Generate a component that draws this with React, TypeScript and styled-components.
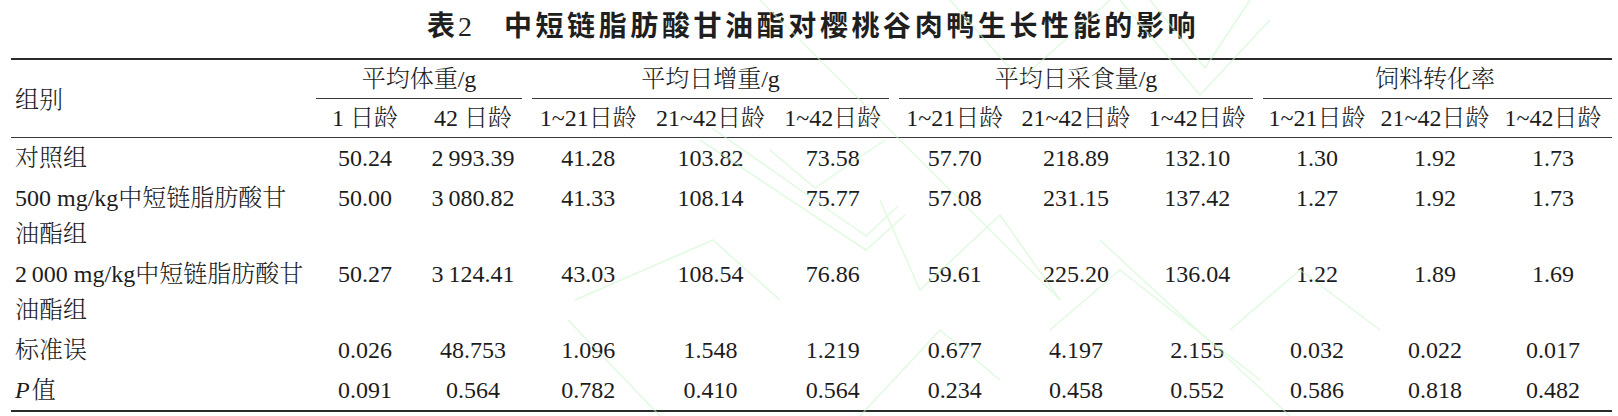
import React from "react";
import styled, { createGlobalStyle } from "styled-components";

const GlobalStyle = createGlobalStyle`
  html, body { margin: 0; padding: 0; background: #ffffff; }
  body { font-family: "Liberation Serif", "Noto Serif CJK SC", "Noto Sans CJK SC", serif; color: #1c1c1c; }
`;

const COLS =
  "300px 108px 108px 122.33px 122.33px 122.34px 121.33px 121.33px 121.34px 118px 118px 118px";

const Page = styled.div`
  position: relative;
  width: 1618px;
  height: 416px;
  overflow: hidden;
  background: #fff;
`;

const Title = styled.h1`
  box-sizing: border-box;
  margin: 0;
  height: 58px;
  padding: 0 0 11px 8px;
  display: flex;
  align-items: center;
  justify-content: center;
  font-family: "Noto Sans CJK SC", "Liberation Sans", sans-serif;
  font-weight: 700;
  font-size: 28px;
  letter-spacing: 3.6px;
  color: #1f1f1f;
`;

const TitleLabel = styled.span`
  margin-right: 32px;
  letter-spacing: 3px;
`;

const TitleNum = styled.span`
  font-family: "Liberation Serif", serif;
  font-weight: 400;
  letter-spacing: 0;
`;

const Table = styled.div`
  margin: 0 6px 0 11px;
  border-top: 2px solid #2a2a2a;
  font-size: 24px;
  font-weight: 300;
`;

const HeaderGrid = styled.div`
  display: grid;
  grid-template-columns: ${COLS};
  grid-template-rows: 39px 38px;
  border-bottom: 1px solid #3a3a3a;
`;

const StubHead = styled.div`
  grid-row: 1 / span 2;
  display: flex;
  align-items: center;
  padding: 2px 0 0 4px;
  line-height: 36px;
`;

const GroupHead = styled.div<{ $span: number }>`
  grid-column: span ${(p) => p.$span};
  display: flex;
  flex-direction: column;
  justify-content: flex-end;
`;

const GroupLabel = styled.div`
  text-align: center;
  line-height: 36px;
  margin-bottom: 1px;
`;

const CMidRule = styled.div<{ $last?: boolean }>`
  height: 1px;
  background: #3a3a3a;
  margin: 0 ${(p) => (p.$last ? "0" : "5px")} 0 5px;
`;

const SubHead = styled.div`
  display: flex;
  align-items: center;
  justify-content: center;
  line-height: 36px;
  white-space: nowrap;
`;

const BodyGrid = styled.div`
  display: grid;
  grid-template-columns: ${COLS};
  align-items: start;
  border-bottom: 2px solid #2a2a2a;
`;

const StubCell = styled.div`
  padding: 2px 6px 2px 4px;
  line-height: 36px;
`;

const DataCell = styled.div`
  padding: 2px 0;
  line-height: 36px;
  text-align: center;
  white-space: nowrap;
`;

const Italic = styled.i`
  font-style: italic;
  margin-right: 2px;
`;

const Watermark = styled.svg`
  position: absolute;
  left: 0;
  top: 0;
  pointer-events: none;
  opacity: 0.55;
`;

const groups: { label: string; span: number }[] = [
  { label: "平均体重/g", span: 2 },
  { label: "平均日增重/g", span: 3 },
  { label: "平均日采食量/g", span: 3 },
  { label: "饲料转化率", span: 3 },
];

const subs = [
  "1 日龄",
  "42 日龄",
  "1~21日龄",
  "21~42日龄",
  "1~42日龄",
  "1~21日龄",
  "21~42日龄",
  "1~42日龄",
  "1~21日龄",
  "21~42日龄",
  "1~42日龄",
];

const T = "\u2009";

const rows: { stub: React.ReactNode; values: string[] }[] = [
  {
    stub: "对照组",
    values: ["50.24", `2${T}993.39`, "41.28", "103.82", "73.58", "57.70", "218.89", "132.10", "1.30", "1.92", "1.73"],
  },
  {
    stub: "500 mg/kg中短链脂肪酸甘油酯组",
    values: ["50.00", `3${T}080.82`, "41.33", "108.14", "75.77", "57.08", "231.15", "137.42", "1.27", "1.92", "1.73"],
  },
  {
    stub: `2${T}000 mg/kg中短链脂肪酸甘油酯组`,
    values: ["50.27", `3${T}124.41`, "43.03", "108.54", "76.86", "59.61", "225.20", "136.04", "1.22", "1.89", "1.69"],
  },
  {
    stub: "标准误",
    values: ["0.026", "48.753", "1.096", "1.548", "1.219", "0.677", "4.197", "2.155", "0.032", "0.022", "0.017"],
  },
  {
    stub: (
      <>
        <Italic>P</Italic>值
      </>
    ),
    values: ["0.091", "0.564", "0.782", "0.410", "0.564", "0.234", "0.458", "0.552", "0.586", "0.818", "0.482"],
  },
];

const marks = [
  "M700 140 L866 250 L905 215",
  "M712 128 L866 236 L898 206",
  "M770 150 L815 188 L885 140",
  "M575 300 L713 240 L780 300",
  "M568 320 L660 416",
  "M760 0 L1060 300",
  "M1120 0 L1200 95 L1270 20",
  "M1150 0 L1205 68 L1250 0",
  "M880 200 L920 290 L1000 215 L1060 300",
  "M950 0 L1020 80 L1110 0",
  "M1100 240 L1290 416",
  "M1050 330 L1120 270 L1260 380",
  "M860 416 L940 330 L1000 380",
  "M1230 330 L1300 270 L1380 330",
];

export default function App() {
  return (
    <Page>
      <GlobalStyle />
      <Title>
        <TitleLabel>
          表<TitleNum>2</TitleNum>
        </TitleLabel>
        中短链脂肪酸甘油酯对樱桃谷肉鸭生长性能的影响
      </Title>
      <Table>
        <HeaderGrid>
          <StubHead>组别</StubHead>
          {groups.map((g, i) => (
            <GroupHead key={g.label} $span={g.span}>
              <GroupLabel>{g.label}</GroupLabel>
              <CMidRule $last={i === groups.length - 1} />
            </GroupHead>
          ))}
          {subs.map((s, i) => (
            <SubHead key={i}>{s}</SubHead>
          ))}
        </HeaderGrid>
        <BodyGrid>
          {rows.map((r, ri) => (
            <React.Fragment key={ri}>
              <StubCell>{r.stub}</StubCell>
              {r.values.map((v, vi) => (
                <DataCell key={vi}>{v}</DataCell>
              ))}
            </React.Fragment>
          ))}
        </BodyGrid>
      </Table>
      <Watermark width="1618" height="416" viewBox="0 0 1618 416">
        {marks.map((d, i) => (
          <path key={i} d={d} fill="none" stroke="#c9f7c9" strokeWidth="1.5" strokeLinejoin="round" />
        ))}
      </Watermark>
    </Page>
  );
}
